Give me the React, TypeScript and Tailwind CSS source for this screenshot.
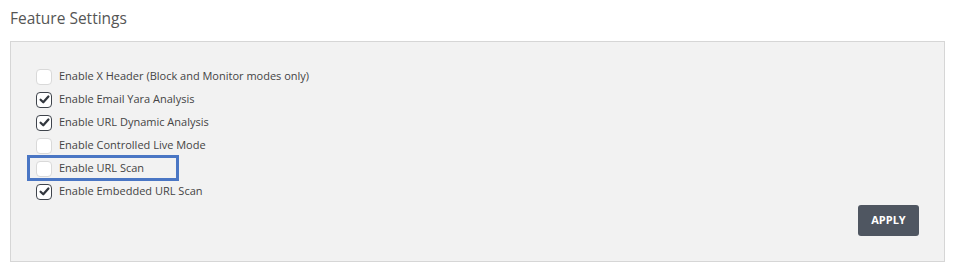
const features = [
  { label: 'Enable X Header (Block and Monitor modes only)', checked: false },
  { label: 'Enable Email Yara Analysis', checked: true },
  { label: 'Enable URL Dynamic Analysis', checked: true },
  { label: 'Enable Controlled Live Mode', checked: false },
  { label: 'Enable URL Scan', checked: false, highlight: true },
  { label: 'Enable Embedded URL Scan', checked: true },
]

function Box({ checked }: { checked: boolean }) {
  return (
    <span
      className={
        'flex h-4 w-4 shrink-0 items-center justify-center rounded-[4px] border bg-white ' +
        (checked ? 'border-[#3f444c]' : 'border-[#d9d9d9]')
      }
    >
      {checked && (
        <svg viewBox="0 0 16 16" className="h-[13px] w-[13px]">
          <path d="M3.2 8.3 L6.5 11.4 L12.8 4.4" fill="none" stroke="#33383f" strokeWidth="2.8" strokeLinecap="round" strokeLinejoin="round" />
        </svg>
      )}
    </span>
  )
}

export default function App() {
  return (
    <div className="min-h-[273px] bg-white font-['Open_Sans',sans-serif]">
      <h2 className="px-[10px] pt-[8px] text-[15.5px] leading-[20px] text-[#555]">Feature Settings</h2>
      <div className="ml-[10px] mt-[13px] w-[935px] border border-[#d6d6d6] bg-[#f2f2f2]">
        <div className="pl-[25px] pt-[23px]">
          {features.map((f) => (
            <div key={f.label} className="relative flex h-[23px] items-center gap-[7px]">
              {f.highlight && (
                <span className="absolute -left-[9px] -top-[2px] h-[26px] w-[152px] border-[3px] border-[#4a76c4]" />
              )}
              <Box checked={f.checked} />
              <span className="text-[11px] text-[#444]">{f.label}</span>
            </div>
          ))}
        </div>
        <div className="mt-[2px] flex justify-end pb-[25px] pr-[25px]">
          <button className="h-[31px] w-[61px] rounded-[3px] bg-[#4f5661] text-[11px] font-bold text-white">APPLY</button>
        </div>
      </div>
    </div>
  )
}
